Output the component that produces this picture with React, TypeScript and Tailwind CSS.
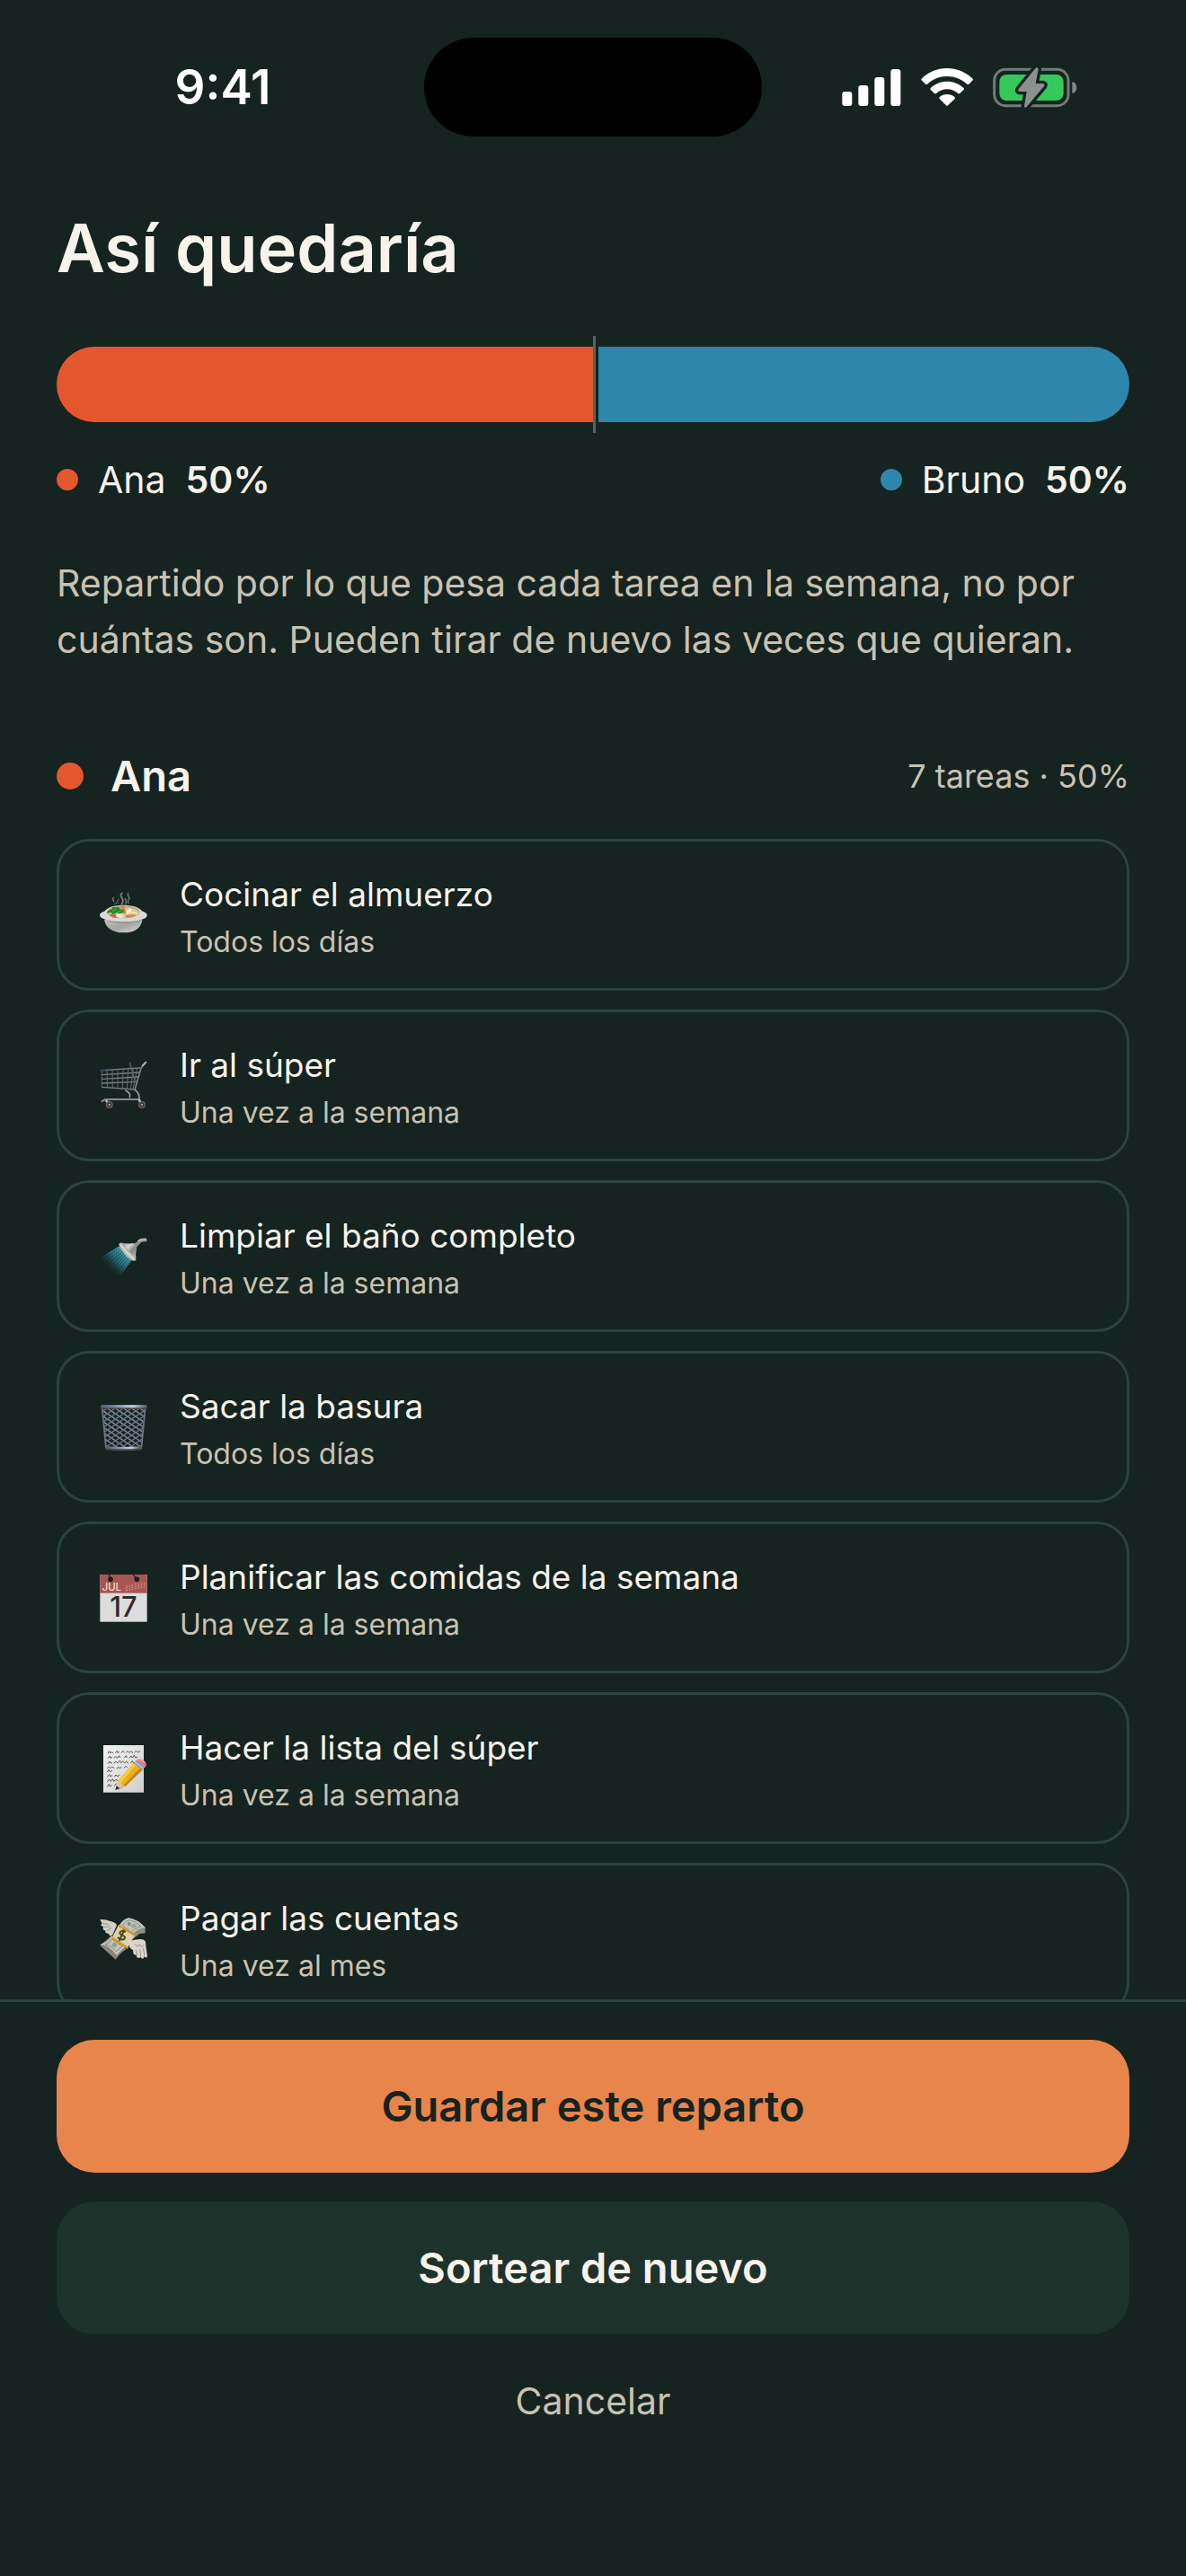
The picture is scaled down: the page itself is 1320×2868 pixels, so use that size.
import type { ReactNode } from "react";

function SignalIcon() {
  return (
    <svg className="h-[42px] w-[66px]" viewBox="110 105 198 126" fill="#fff" aria-hidden="true">
      <rect x="111" y="183" width="33" height="48" rx="9" />
      <rect x="165" y="162" width="33" height="69" rx="9" />
      <rect x="219" y="135" width="33" height="96" rx="9" />
      <rect x="273" y="108" width="33" height="123" rx="9" />
    </svg>
  );
}

function WifiIcon() {
  return (
    <svg className="h-[42px] w-[58px]" viewBox="373 105 174 126" fill="#fff" aria-hidden="true">
      <path d="M460 105C427 105 397 118 375 140Q373 143 375 145L388 158Q391 160 394 158C412 141 435 132 460 132S509 141 527 158Q530 160 533 158L546 145Q548 143 546 140C523 118 493 105 460 105Z" />
      <path d="M460 149C439 149 420 157 405 171Q403 174 405 176L418 189Q421 191 424 189C434 180 447 175 460 175S487 180 497 189Q500 191 503 189L516 176Q518 174 516 171C501 157 482 149 460 149Z" />
      <path d="M460 192C450 192 442 195 435 202Q433 205 435 207L457 229Q460 232 463 229L486 207Q488 205 486 202C479 195 470 192 460 192Z" />
    </svg>
  );
}

function BatteryIcon() {
  const bolt =
    "M757 104 700 174Q696 182 704 183H727L719 231Q719 238 726 235L785 165Q789 157 781 156H757L766 108Q765 101 757 104Z";
  return (
    <svg className="h-[45px] w-[94px]" viewBox="614 102 282 135" aria-hidden="true">
      <rect x="619" y="109" width="247" height="121" rx="37" fill="none" stroke="#737c7a" strokeWidth="9" />
      <path d="M879 150C888 152 894 160 894 170S888 187 879 189Z" fill="#7f8785" />
      <rect x="636" y="126" width="214" height="87" rx="24" fill="#35c95c" />
      <path d={bolt} fill="#152321" stroke="#152321" strokeWidth="20" strokeLinejoin="round" />
      <path d={bolt} fill="#8a918f" />
    </svg>
  );
}

function Emoji({ children }: { children: ReactNode }) {
  return (
    <svg className="size-[54px] shrink-0" viewBox="63 63 162 162" aria-hidden="true">
      {children}
    </svg>
  );
}

function SoupIcon() {
  return (
    <Emoji>
      <defs>
        <linearGradient id="bowl" x1="0" y1="0" x2="1" y2="1">
          <stop offset="0" stopColor="#c4c4c2" />
          <stop offset=".5" stopColor="#a3a3a2" />
          <stop offset="1" stopColor="#dededc" />
        </linearGradient>
      </defs>
      <g fill="none" stroke="#9aa3a0" strokeLinecap="round" opacity=".7">
        <path d="M109 84q-4 6 1 14" strokeWidth="4" />
        <path d="M112 108q10-12 6-3M124 104q-6-8 2-14" strokeWidth="3" />
        <path d="M137 70q-7 7 0 16t0 20" strokeWidth="6" />
        <path d="M158 70q-3 6 3 14M163 86q-8 8-4 18M148 88q6 8 2 18" strokeWidth="4" />
      </g>
      <path d="M78 158C82 184 102 202 142 202S201 186 206 158Z" fill="url(#bowl)" />
      <path d="M63 143C64 136 74 133 80 130 90 116 114 110 142 110S194 116 204 130C212 133 221 137 221 144 220 155 208 156 200 159 180 168 104 168 86 159 76 156 64 153 63 143Z" fill="#dad9d7" />
      <path d="M86 160C106 168 180 168 200 159 184 174 102 174 86 160Z" fill="#8c8c8b" />
      <ellipse cx="142" cy="133" rx="55" ry="21" fill="#b9ad98" />
      <ellipse cx="143" cy="136" rx="50" ry="17" fill="#dcc99c" />
      <path d="M94 144q10-8 24-3l12 8q-8 6-22 3Z" fill="#c76f35" />
      <path d="M118 142l14-5 12 9-9 7-17-3Z" fill="#f2e4ca" />
      <path d="M150 144q20-5 36 0-12 10-36 8Z" fill="#d18a4c" />
      <path d="M148 132l16-12 6 7-12 14Z" fill="#fbf3df" />
      <path d="M160 138q14-8 28 0" fill="none" stroke="#efdfb4" strokeWidth="6" />
      <path d="M132 113l10-1 10 22-8 6Z" fill="#e8763a" />
      <path d="M90 130l12-6 4-8 13 2 7-3 5 8 12 4-1 9-14 3-8-3-14 4-6-5-14 2Z" fill="#1f8a2c" />
      <path d="M104 132l14-10M120 134l16-6" stroke="#47b34d" strokeWidth="3" />
    </Emoji>
  );
}

function CartIcon() {
  return (
    <Emoji>
      <g fill="none" strokeLinecap="round">
        <path d="M216 66 207 76 201 85 180 157" stroke="#7e8583" strokeWidth="5" />
        <path d="M217 65 206 77" stroke="#b9bdbb" strokeWidth="5" />
        <path d="M69 92 198 84M70 107 194 99M70 121 190 114M71 135 187 130M71 148 181 156" stroke="#7b8280" strokeWidth="4" />
        <path d="M70 92v56M87 92l2 58M105 91l1 60M123 90v62M141 88l-2 66M158 87l-4 68M175 86l-9 70M188 86l-14 70" stroke="#656d6b" strokeWidth="3" />
        <path d="M163 67l7 22 9 36" stroke="#5e6664" strokeWidth="4" />
        <path d="M67 93h11" stroke="#27485f" strokeWidth="7" />
        <path d="M150 160q18 9 13 22M182 158q14 12 13 27v10" stroke="#989d9b" strokeWidth="5" />
        <path d="M71 195 82 189H192" stroke="#858b89" strokeWidth="6" />
        <path d="M86 195l8 11M196 193l7 12" stroke="#c3c5c4" strokeWidth="8" />
      </g>
      <circle cx="95" cy="207" r="10" fill="#373735" stroke="#6a6362" strokeWidth="4" />
      <circle cx="204" cy="207" r="10" fill="#373735" stroke="#6a6362" strokeWidth="4" />
      <circle cx="95" cy="207" r="3" fill="#c3b9b7" />
      <circle cx="204" cy="207" r="3" fill="#c3b9b7" />
    </Emoji>
  );
}

function ShowerIcon() {
  return (
    <Emoji>
      <defs>
        <linearGradient id="spray" x1="150" y1="130" x2="88" y2="190" gradientUnits="userSpaceOnUse">
          <stop offset="0" stopColor="#3cb4c4" />
          <stop offset=".45" stopColor="#27798a" />
          <stop offset="1" stopColor="#152321" stopOpacity="0" />
        </linearGradient>
        <linearGradient id="head" x1="135" y1="100" x2="185" y2="150" gradientUnits="userSpaceOnUse">
          <stop offset="0" stopColor="#8b8d8a" />
          <stop offset=".35" stopColor="#d6d6d2" />
          <stop offset=".6" stopColor="#858783" />
          <stop offset="1" stopColor="#c6c6c2" />
        </linearGradient>
      </defs>
      <path d="M128 108 68 146Q92 185 124 206L168 157Z" fill="url(#spray)" opacity=".55" />
      <path
        d="M130 112 70 148M134 117 73 160M139 122 78 171M144 128 84 182M148 134 92 190M153 140 99 197M158 146 108 202M163 152 120 206M167 156 130 207"
        stroke="url(#spray)"
        strokeWidth="5"
        strokeDasharray="5 2"
      />
      <path d="M174 101Q186 99 193 88 198 82 219 83L221 94Q204 93 199 99 190 109 184 114Z" fill="#8f918e" />
      <path d="M190 92Q200 86 219 87" fill="none" stroke="#c3c4c0" strokeWidth="4" />
      <path d="M131 97Q155 103 174 99L187 111Q181 135 184 157 176 158 169 153L131 112Z" fill="url(#head)" />
      <path d="M127 103Q129 96 139 101L182 148Q187 159 173 158 151 148 132 116Z" fill="#b5b5b1" />
      <path d="M132 104Q152 131 178 153" fill="none" stroke="#dddcd8" strokeWidth="5" />
    </Emoji>
  );
}

function BasketIcon() {
  return (
    <Emoji>
      <defs>
        <linearGradient id="rim" x1="0" x2="1">
          <stop offset="0" stopColor="#56606a" />
          <stop offset=".3" stopColor="#6f8faf" />
          <stop offset=".7" stopColor="#bdd7ed" />
          <stop offset="1" stopColor="#5b5858" />
        </linearGradient>
        <clipPath id="basket">
          <path d="M71 80H215L202 215H84Z" />
        </clipPath>
      </defs>
      <g clipPath="url(#basket)" fill="none" strokeWidth="4">
        <path
          stroke="#8390a0"
          d="M60 80l160 106M60 98l150 100M60 116l150 100M60 134l140 93M60 152l110 73M60 170l80 53M75 72l150 100M102 72l120 80M129 72l90 60M156 72l70 46M183 72l40 26M60 188l50 34"
        />
        <path
          stroke="#687380"
          d="M225 80 65 186M225 98 75 198M225 116 75 216M225 134 85 227M225 152 115 225M225 170 145 223M210 72 60 172M183 72 63 152M156 72 66 132M129 72 59 118M102 72 62 98M225 188 175 222"
        />
      </g>
      <path d="M71 80 84 216M215 80 202 216" stroke="#68788a" strokeWidth="5" />
      <path d="M84 214q59 5 118 0" fill="none" stroke="#4b4442" strokeWidth="13" />
      <path d="M86 211q57 5 114 0" fill="none" stroke="url(#rim)" strokeWidth="7" />
      <rect x="65" y="69" width="157" height="14" rx="7" fill="#4f4844" />
      <rect x="67" y="70" width="153" height="9" rx="4" fill="url(#rim)" />
    </Emoji>
  );
}

function CalendarIcon() {
  return (
    <Emoji>
      <rect x="64" y="66" width="157" height="158" fill="#dcdcdc" />
      <rect x="64" y="66" width="157" height="62" fill="#a85654" />
      <path d="M94 66l5 14M175 66l9 14" stroke="#152321" strokeWidth="4" />
      <circle cx="99" cy="82" r="8.500" fill="#152321" />
      <circle cx="187" cy="82" r="8.500" fill="#152321" />
      <path d="M153 103v18M163 101v19M172 98v21M182 96v22M192 96v20M202 94v19M212 93v17" stroke="#cb8f8c" strokeWidth="5" strokeDasharray="3 2" />
      <text x="71" y="120" fontFamily="Inter, sans-serif" fontSize="34" fontWeight="500" fill="#eadddd">
        JUL
      </text>
      <text x="142" y="208" textAnchor="middle" fontFamily="Inter, sans-serif" fontSize="92" fontWeight="500" fill="#2c2c2c">
        17
      </text>
    </Emoji>
  );
}

function MemoIcon() {
  return (
    <Emoji>
      <defs>
        <linearGradient id="paper" x1="0" y1="0" x2="1" y2="1">
          <stop offset="0" stopColor="#f2f2f0" />
          <stop offset="1" stopColor="#cfcfcd" />
        </linearGradient>
      </defs>
      <rect x="75" y="66" width="135" height="158" fill="url(#paper)" />
      <g fill="none" stroke="#55565a" strokeWidth="3" strokeLinejoin="round">
        <path d="M90 94l5-8 3 7 5-4 6 4m6-1 6-7 2 7 5-4m7 4 5-7 5 6m6 0 5-5 5 5 6-4 7 4m5-1 6-5 5 5 8-4" />
        <path d="M90 110l7-8 2 8 6-5m6 5 5-6 6 5 6-8 3 7m13 1 7-8 3 7m8 1 5-7 5 6 6-8 4 8 7-3" />
        <path d="M90 128l7-8 3 7 5-4m6 4 5-7 6 6 7-8 5 7 6-5 6 6 6-6 7 7m7-1 6-7 4 7" />
        <path d="M88 144l6-6 5 5 5-5 8 5m8 3 5-7 5 4 6-4m8 3 6-6 5 5" />
        <path d="M88 156l5-8 4 7 8-4M88 172l7-8 4 7 6-5m7 5 5-6 6 5 8-5" />
        <path d="M88 188l7-8 5 7 6-8 4 8 7-6 8 5M88 205l6-9 4 8 6-5m8 4 6-9" />
      </g>
      <path d="M121 219 186 148 206 151 140 207Z" fill="#77756d" opacity=".5" />
      <path d="M115 216 125 182 149 200Z" fill="#e3c79d" />
      <path d="M115 216 119 202 130 210Z" fill="#292724" />
      <path d="M125 182 176 126 205 148 149 203 139 200 134 192Z" fill="#eab021" />
      <path d="M125 182 176 126 184 132 134 192Z" fill="#f5cb40" />
      <path d="M149 203 205 148 198 142 142 201Z" fill="#c48412" />
      <path d="M176 126 184 117 214 139 205 150Z" fill="#8fa0ad" />
      <path d="M180 122 209 144" stroke="#d3dce2" strokeWidth="3" />
      <path d="M184 117Q193 108 207 115 221 123 218 134L213 141Z" fill="#dd7d88" />
      <path d="M190 115q10-4 22 9" fill="none" stroke="#f0a5ab" strokeWidth="5" />
    </Emoji>
  );
}

function MoneyIcon() {
  return (
    <Emoji>
      <path d="M128 98Q142 76 160 73 180 78 215 105L215 124 196 126 174 143Z" fill="#8b8b84" />
      <path d="M128 98Q142 76 160 73 190 77 215 105 188 108 168 133Z" fill="#c3c4b8" />
      <path d="M139 97q12-16 24-17 20 5 38 21-20 6-34 20Z" fill="none" stroke="#898d82" strokeWidth="3" />
      <circle cx="161" cy="93" r="6" fill="#64957c" />
      <ellipse cx="177" cy="100" rx="9" ry="7" fill="#9fa298" />
      <path d="M102 132 64 165 116 212 131 193 152 177Z" fill="#85857d" />
      <path d="M102 132Q94 153 64 161 96 164 119 198 137 179 153 166Z" fill="#c3c4b8" />
      <path d="M103 143q-6 14-22 19 22 5 37 23 12-10 20-17Z" fill="none" stroke="#898d82" strokeWidth="3" />
      <circle cx="112" cy="163" r="8" fill="#989b92" />
      <path d="M125 98 180 131 155 175 103 140Z" fill="#dbd2b1" />
      <path d="M125 98 183 132M103 138 157 174" stroke="#d99a16" strokeWidth="7" />
      <path d="M149 121C141 111 130 118 130 124 130 133 148 129 147 139 146 147 132 148 123 138M145 113 128 150" fill="none" stroke="#594618" strokeWidth="6" />
      <path d="M64 78Q84 77 96 83 116 86 120 97L106 130 97 133 92 125 83 123 82 116 74 112 75 102 67 98 70 90Z" fill="#d3d0c3" />
      <path d="M71 91l22 3M78 104l20-3M86 116l16-10" stroke="#97958a" strokeWidth="3" />
      <path d="M161 151Q177 145 198 144 213 144 216 154L218 174 222 201Q218 210 212 201L209 208Q203 212 200 203L195 207 187 205 185 197 176 194 174 180Q158 174 161 151Z" fill="#d9d6c9" />
      <path d="M181 160l7 9 8-8 6 10 8-8M184 179l4 21M197 178l3 24M208 174l5 24" fill="none" stroke="#96948a" strokeWidth="3" />
    </Emoji>
  );
}

const tasks = [
  { name: "Cocinar el almuerzo", frequency: "Todos los días", icon: <SoupIcon /> },
  { name: "Ir al súper", frequency: "Una vez a la semana", icon: <CartIcon /> },
  { name: "Limpiar el baño completo", frequency: "Una vez a la semana", icon: <ShowerIcon /> },
  { name: "Sacar la basura", frequency: "Todos los días", icon: <BasketIcon /> },
  { name: "Planificar las comidas de la semana", frequency: "Una vez a la semana", icon: <CalendarIcon /> },
  { name: "Hacer la lista del súper", frequency: "Una vez a la semana", icon: <MemoIcon /> },
  { name: "Pagar las cuentas", frequency: "Una vez al mes", icon: <MoneyIcon /> },
];

export default function App() {
  return (
    <div className="flex h-screen flex-col bg-[#152321] font-['Inter',sans-serif] text-[#f7f2ea]">
      <header className="grid shrink-0 grid-cols-[1fr_auto_1fr] items-center pt-[42px]">
        <time className="pl-6 text-center text-[53px] leading-[64px] font-semibold text-white">9:41</time>
        <div className="h-[110px] w-[376px] rounded-full bg-black" />
        <div className="flex items-center justify-center gap-[22px] pr-8">
          <SignalIcon />
          <WifiIcon />
          <BatteryIcon />
        </div>
      </header>

      <main className="min-h-0 flex-1 overflow-y-auto px-[63px] pt-[78px] [scrollbar-width:none]">
        <h1 className="text-[74px] leading-[92px] font-semibold">Así quedaría</h1>

        <div className="relative mt-16 flex h-[84px]">
          <div className="w-1/2 rounded-l-full bg-[#e4572e]" />
          <div className="ml-[6px] flex-1 rounded-r-full bg-[#2e86ab]" />
          <div className="absolute -inset-y-3 left-1/2 w-[3px] bg-[#5a625b]" />
        </div>

        <div className="mt-[37px] flex justify-between text-[41px] leading-[54px]">
          <div className="flex items-center">
            <span className="mr-[22px] size-6 rounded-full bg-[#e4572e]" />
            <span className="mr-[22px]">Ana</span>
            <span className="font-semibold">50%</span>
          </div>
          <div className="flex items-center">
            <span className="mr-[22px] size-6 rounded-full bg-[#2e86ab]" />
            <span className="mr-[22px]">Bruno</span>
            <span className="font-semibold">50%</span>
          </div>
        </div>

        <p className="mt-[57px] text-[41px] leading-[63px] text-[#c9c1b1]">
          Repartido por lo que pesa cada tarea en la semana, no por cuántas son. Pueden tirar de nuevo las veces que
          quieran.
        </p>

        <section className="mt-[90px]">
          <div className="flex items-center">
            <span className="mr-[30px] size-[30px] rounded-full bg-[#e4572e]" />
            <h2 className="text-[47px] leading-[60px] font-semibold">Ana</h2>
            <span className="ml-auto text-[36px] leading-[48px] text-[#c9c1b1]">7 tareas · 50%</span>
          </div>
          <ul className="mt-10 flex flex-col gap-[21px] pb-12">
            {tasks.map((task) => (
              <li
                key={task.name}
                className="flex items-center gap-[35px] rounded-[36px] border-3 border-[#2a443d] px-[45px] py-[31px]"
              >
                {task.icon}
                <div className="pt-1">
                  <h3 className="text-[37px] leading-[48px]">{task.name}</h3>
                  <p className="mt-[9px] text-[32px] leading-[40px] text-[#c9c1b1]">{task.frequency}</p>
                </div>
              </li>
            ))}
          </ul>
        </section>
      </main>

      <footer className="flex shrink-0 flex-col gap-8 border-t-3 border-[#2a443d] px-[63px] pt-[42px] pb-[153px]">
        <button type="button" className="h-[148px] rounded-[42px] bg-[#e8854a] text-[47px] leading-[60px] font-semibold text-[#152321]">
          Guardar este reparto
        </button>
        <button type="button" className="h-[148px] rounded-[42px] bg-[#1e322c] text-[47px] leading-[60px] font-semibold">
          Sortear de nuevo
        </button>
        <button type="button" className="h-[84px] text-[41px] leading-[54px] text-[#c9c1b1]">
          Cancelar
        </button>
      </footer>
    </div>
  );
}
